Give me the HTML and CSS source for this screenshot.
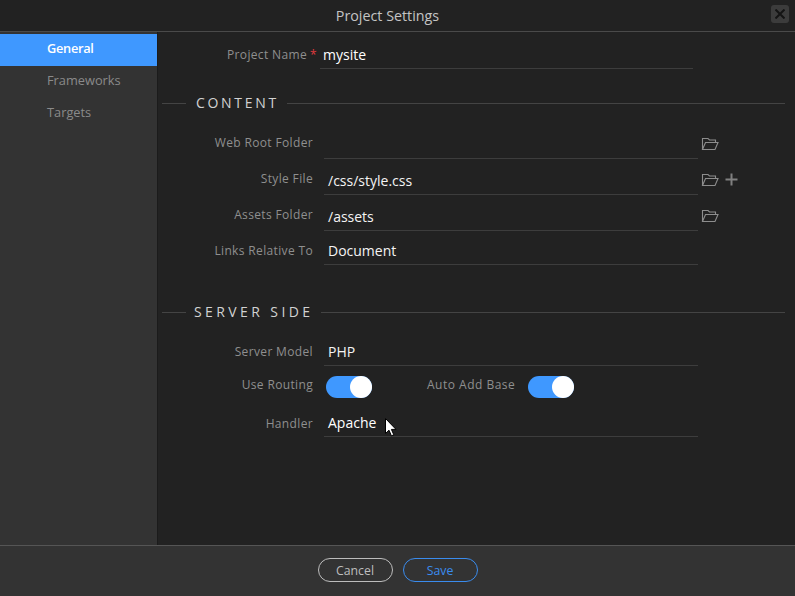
FILE: index.html
```html
<!DOCTYPE html>
<html>

<head>
  <title>Project Settings</title>
  <link rel="stylesheet" href="styles.css">
</head>

<body>
  <svg class="defs" width="0" height="0">
    <symbol id="folder" viewBox="0 0 18 14">
      <path d="M1.5 12.5V1.5H7L8.5 3H14.5V5.5M1.5 12.5H14L17 5.5H4.5L1.5 12.5Z" fill="none" stroke="#8d8d8d" stroke-width="1.1" />
    </symbol>
  </svg>
  <div id="dialog">
    <div id="header">
      <span class="title">Project Settings</span>
      <button class="close">
        <svg width="10" height="10" viewBox="0 0 10 10">
          <path d="M0.5 0.5L9.5 9.5M9.5 0.5L0.5 9.5" stroke="#141414" stroke-width="2" />
        </svg>
      </button>
    </div>
    <div id="middle">
      <div id="sidebar">
        <div class="nav active">General</div>
        <div class="nav">Frameworks</div>
        <div class="nav">Targets</div>
      </div>
      <div id="content">
        <div class="row name-row">
          <label class="lbl">Project Name<span class="req">*</span></label>
          <div class="field">mysite</div>
        </div>

        <div class="section first"><span>CONTENT</span></div>

        <div class="row root-row">
          <label class="lbl">Web Root Folder</label>
          <div class="field"></div>
          <svg class="icon"><use href="#folder" /></svg>
        </div>
        <div class="row">
          <label class="lbl">Style File</label>
          <div class="field">/css/style.css</div>
          <svg class="icon"><use href="#folder" /></svg>
          <svg class="plus" width="13" height="13" viewBox="0 0 13 13">
            <path d="M6.5 0.5V12.5M0.5 6.5H12.5" stroke="#808080" stroke-width="2" />
          </svg>
        </div>
        <div class="row">
          <label class="lbl">Assets Folder</label>
          <div class="field">/assets</div>
          <svg class="icon"><use href="#folder" /></svg>
        </div>
        <div class="row short">
          <label class="lbl">Links Relative To</label>
          <div class="field">Document</div>
        </div>

        <div class="section second"><span>SERVER SIDE</span></div>

        <div class="row server-row">
          <label class="lbl">Server Model</label>
          <div class="field">PHP</div>
        </div>
        <div class="toggles">
          <label class="lbl">Use Routing</label>
          <div class="toggle"></div>
          <label class="lbl auto">Auto Add Base</label>
          <div class="toggle"></div>
        </div>
        <div class="row handler-row">
          <label class="lbl">Handler</label>
          <div class="field">Apache</div>
          <svg class="cursor" width="12" height="19" viewBox="0 0 12 19">
            <path d="M0.5 0.5V15.5L4 12.2L6.4 17.8L8.8 16.8L6.4 11.4H11L0.5 0.5Z" fill="#fff" stroke="#000" stroke-width="1" />
          </svg>
        </div>
      </div>
    </div>
    <div id="footer">
      <button class="btn">Cancel</button>
      <button class="btn save">Save</button>
    </div>
  </div>
</body>

</html>
```

FILE: styles.css
```css
body {
  margin: 0;
  font-family: 'Open Sans', sans-serif;
  font-size: 14px;
  background: #222;
  color: #fff;
}

.defs {
  display: block;
  height: 0;
}

#dialog {
  height: 596px;
  display: flex;
  flex-direction: column;
}

#header {
  height: 31px;
  flex: none;
  border-bottom: 1px solid #4a4a4a;
  display: flex;
  align-items: center;
  justify-content: center;
  padding-right: 20px;
  position: relative;
}

.title {
  color: #c4c4c4;
  font-size: 14.3px;
}

.close {
  position: absolute;
  top: 5px;
  right: 6px;
  width: 18px;
  height: 18px;
  padding: 0;
  border: none;
  border-radius: 3px;
  background: #3c3c3c;
  display: flex;
  align-items: center;
  justify-content: center;
}

#middle {
  flex: 1;
  display: flex;
  min-height: 0;
}

#sidebar {
  width: 157px;
  flex: none;
  background: #333;
  border-right: 1px solid #1b1b1b;
  padding-top: 2px;
}

.nav {
  height: 32px;
  line-height: 29px;
  padding-left: 47px;
  font-size: 12.8px;
  color: #8a8a8a;
}

.nav.active {
  background: #3f98ff;
  color: #fff;
  font-weight: 600;
  letter-spacing: -0.3px;
}

#content {
  flex: 1;
  min-width: 0;
}

.row {
  display: flex;
  align-items: center;
  height: 36px;
  position: relative;
}

.lbl {
  width: 155px;
  flex: none;
  text-align: right;
  color: #8f8f8f;
  font-size: 12px;
  letter-spacing: 0.35px;
  padding-top: 2px;
  box-sizing: border-box;
}

.req {
  color: #e03a3f;
  margin-left: 3px;
}

.field {
  width: 370px;
  height: 35px;
  line-height: 43px;
  flex: none;
  margin-left: 11px;
  padding-left: 4px;
  border-bottom: 1px solid #3d3d3d;
  box-sizing: content-box;
  color: #f4f4f4;
  font-size: 14px;
  white-space: nowrap;
}

.name-row .lbl {
  width: 159px;
  padding-top: 6px;
}

.name-row {
  margin-top: 1px;
}

.name-row .field {
  width: 370px;
  margin-left: 3px;
  padding-left: 3px;
  color: #fff;
}

.section {
  display: flex;
  align-items: center;
  margin: 0 10px 0 4px;
  color: #d2d2d2;
  font-size: 14px;
  letter-spacing: 2.7px;
}

.section span {
  margin-top: -1px;
}

.section::before,
.section::after {
  content: "";
  height: 1px;
  background: #444;
}

.section::before {
  width: 24px;
  margin-right: 10px;
}

.section::after {
  flex: 1;
  margin-left: 8px;
}

.section.first {
  height: 20px;
  margin-top: 24px;
}

.section.second {
  height: 20px;
  margin-top: 37px;
  letter-spacing: 3.4px;
}

.section.second::before {
  margin-right: 8px;
}

.root-row {
  margin-top: 10px;
}

.short {
  height: 34px;
}

.short .lbl {
  padding-top: 4px;
}

.short .field {
  height: 33px;
  line-height: 39px;
}

.server-row {
  margin-top: 8px;
}

.server-row .lbl {
  padding-top: 6px;
}

.handler-row .lbl {
  padding-top: 8px;
}

.icon {
  width: 18px;
  height: 14px;
  margin-left: 3px;
  flex: none;
  margin-top: 5px;
}

.plus {
  margin-left: 6px;
  margin-top: 5px;
}

.toggles {
  display: flex;
  align-items: center;
  height: 35px;
}

.toggles .lbl {
  padding-bottom: 1px;
}

.toggles .auto {
  width: auto;
  margin-left: 55px;
  letter-spacing: 0.5px;
}

.toggle {
  width: 46px;
  height: 22px;
  border-radius: 11px;
  background: #3f98ff;
  position: relative;
  margin-left: 13px;
  margin-top: 6px;
}

.toggle::after {
  content: "";
  position: absolute;
  right: 0;
  top: 0;
  width: 22px;
  height: 22px;
  border-radius: 50%;
  background: #fff;
}

.handler-row .field {
  color: #fff;
}

.cursor {
  position: absolute;
  left: 227px;
  top: 17px;
}

#footer {
  height: 50px;
  flex: none;
  box-sizing: content-box;
  background: #333;
  border-top: 1px solid #555;
  display: flex;
  align-items: center;
  justify-content: center;
  gap: 10px;
}

.btn {
  width: 75px;
  height: 24px;
  padding: 0;
  margin-bottom: 2px;
  border: 1px solid #bdbdbd;
  border-radius: 12px;
  background: transparent;
  color: #bdbdbd;
  font-family: inherit;
  font-size: 12.3px;
}

.btn.save {
  border-color: #3a8cee;
  color: #3a8cee;
}
```
